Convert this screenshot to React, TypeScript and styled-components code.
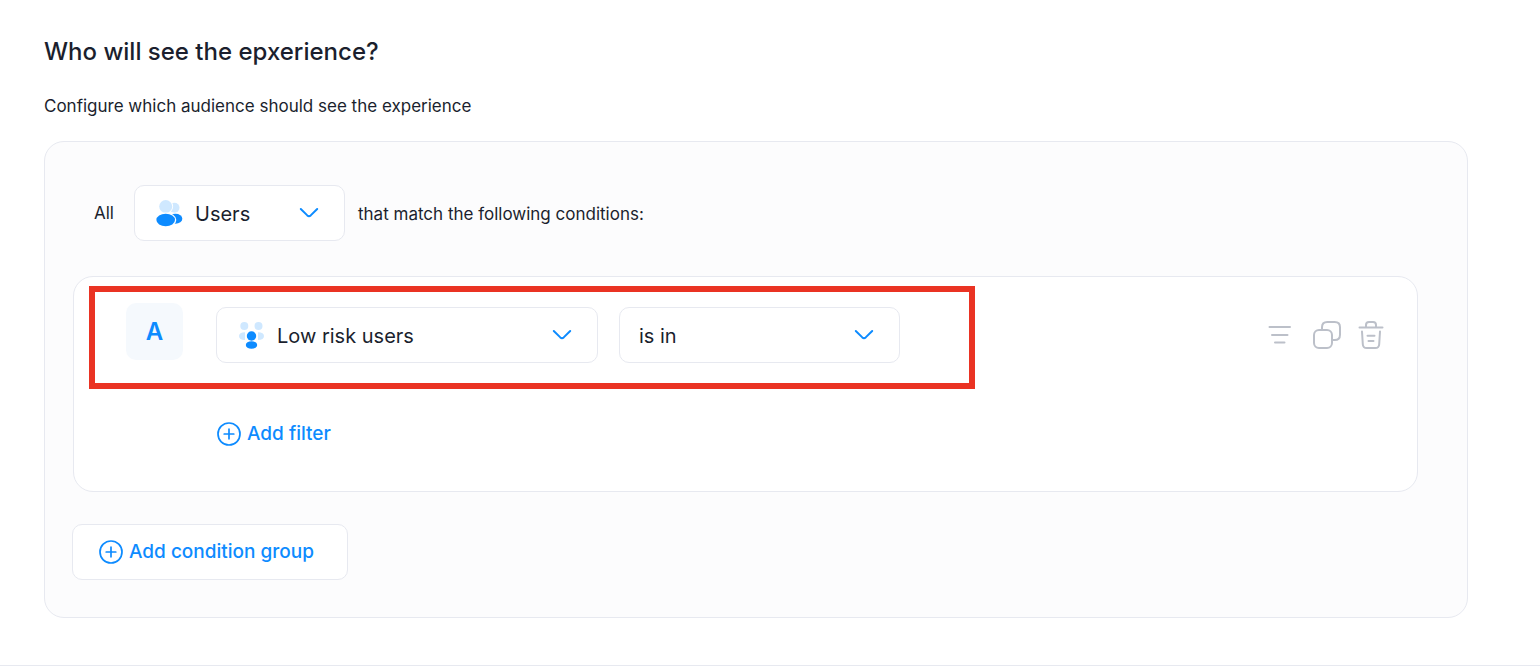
import React from "react";
import styled, { createGlobalStyle } from "styled-components";

const blue = "#0d8bff";
const ink = "#1b1f2e";
const line = "#e7e9f0";

const GlobalStyle = createGlobalStyle`
  * { box-sizing: border-box; }
  body {
    margin: 0;
    background: #fff;
    color: ${ink};
    font-family: Inter, "Liberation Sans", sans-serif;
  }
  button, select { font: inherit; color: inherit; margin: 0; }
`;

const Page = styled.main`
  padding: 36px 72px 47px 44px;
  border-bottom: 1px solid #e7e9f0;
`;

const Title = styled.h1`
  margin: 0;
  font-size: 24px;
  line-height: 32px;
  font-weight: 500;
`;

const Subtitle = styled.p`
  margin: 26px 0 23px;
  font-size: 17px;
  line-height: 24px;
`;

const Panel = styled.section`
  padding: 43px 49px 37px 28px;
  border: 1px solid ${line};
  border-radius: 20px;
  background: #fcfcfd;
`;

const AudienceRow = styled.div`
  display: flex;
  align-items: center;
  padding-left: 21px;
  margin-bottom: 35px;
  font-size: 17px;
  line-height: 24px;
`;

const Lead = styled.label`
  width: 40px;
`;

const Trail = styled.span`
  margin-left: 13px;
  padding-top: 2px;
`;

const SelectBox = styled.div<{ $width: number }>`
  display: grid;
  align-items: center;
  flex: 0 1 ${(p) => p.$width}px;
  height: 56px;
  > * { grid-area: 1 / 1; }
  > svg { pointer-events: none; }
  > svg:last-child { justify-self: end; margin-right: 26px; }
`;

const LeadingIcon = styled.svg`
  margin-left: 22px;
  z-index: 1;
`;

const Select = styled.select<{ $indent: number }>`
  appearance: none;
  width: 100%;
  height: 100%;
  padding: 2px 60px 0 ${(p) => p.$indent}px;
  border: 1px solid ${line};
  border-radius: 10px;
  background: #fff;
  font-size: 20px;
`;

const Group = styled.div`
  position: relative;
  padding: 26px 32px 43px 52px;
  border: 1px solid ${line};
  border-radius: 20px;
  background: #fff;
`;

const Highlight = styled.div`
  position: absolute;
  top: 9px;
  left: 15px;
  width: 886px;
  height: 103px;
  border: 6px solid #ea3323;
  pointer-events: none;
`;

const RuleRow = styled.div`
  display: flex;
  align-items: flex-start;
`;

const Badge = styled.span`
  display: grid;
  place-items: center;
  flex: none;
  width: 57px;
  height: 57px;
  margin-right: 33px;
  border-radius: 10px;
  background: #f5f9fd;
  color: ${blue};
  font-size: 24px;
  font-weight: 600;
`;

const Fields = styled.div`
  display: flex;
  flex: 1;
  gap: 21px;
  padding-top: 4px;
`;

const Tools = styled.div`
  display: flex;
  gap: 16px;
  padding-top: 18px;
`;

const Tool = styled.button`
  display: flex;
  padding: 0;
  border: 0;
  background: none;
`;

const LinkButton = styled.button`
  display: flex;
  align-items: center;
  gap: 6px;
  margin: 57px 0 0 91px;
  padding: 0;
  border: 0;
  background: none;
  color: ${blue};
  font-size: 19px;
  line-height: 28px;
  font-weight: 500;
`;

const OutlineButton = styled(LinkButton)`
  height: 56px;
  margin: 32px 0 0 -1px;
  padding: 0 33px 0 26px;
  border: 1px solid ${line};
  border-radius: 10px;
  background: #fff;
`;

const Chevron = () => (
  <svg width="20" height="12" viewBox="0 0 20 12" fill="none" stroke={blue} strokeWidth="2" strokeLinecap="round" strokeLinejoin="round" aria-hidden="true">
    <path d="M1.8 2 8.3 8.4Q10 10 11.7 8.4L18.2 2" />
  </svg>
);

const PlusCircle = () => (
  <svg width="24" height="24" viewBox="0 0 24 24" fill="none" stroke={blue} strokeWidth="1.7" strokeLinecap="round" aria-hidden="true">
    <circle cx="12" cy="12" r="11" />
    <path d="M12 7.2v9.6M7.2 12h9.6" />
  </svg>
);

const UsersIcon = () => (
  <LeadingIcon width="28" height="28" viewBox="0 0 28 28" aria-hidden="true">
    <circle cx="18.5" cy="8.7" r="5" fill="#cfe8ff" />
    <ellipse cx="19.5" cy="19.8" rx="6.8" ry="5" fill={blue} />
    <circle cx="9.7" cy="7.5" r="7.4" fill="#fff" />
    <circle cx="9.7" cy="7.5" r="6.5" fill="#cfe8ff" />
    <ellipse cx="9.7" cy="21" rx="10.6" ry="7.4" fill="#fff" />
    <ellipse cx="9.7" cy="21" rx="9.3" ry="6.2" fill={blue} />
  </LeadingIcon>
);

const SegmentIcon = () => (
  <LeadingIcon width="28" height="28" viewBox="0 0 28 28" aria-hidden="true">
    <g fill="#cfe8ff">
      <circle cx="6.3" cy="5" r="4" />
      <circle cx="20.5" cy="5" r="4" />
      <path d="M7 11.2v7.8Q1 19 1 15.1T7 11.2ZM20 11.2v7.8Q26 19 26 15.1T20 11.2Z" />
    </g>
    <circle cx="13.5" cy="15" r="5.8" fill="#fff" />
    <circle cx="13.5" cy="15" r="4.7" fill={blue} />
    <ellipse cx="13.5" cy="24" rx="5.7" ry="3.8" fill={blue} />
  </LeadingIcon>
);

const toolStroke = { fill: "none", stroke: "#bcc0c9", strokeWidth: 2, strokeLinecap: "round", strokeLinejoin: "round" } as const;

const FilterIcon = () => (
  <svg width="30" height="28" viewBox="0 0 30 28" {...toolStroke} aria-hidden="true">
    <path d="M2.5 6h20.5M5 14h15.5M8 21.5h9.5" />
  </svg>
);

const CopyIcon = () => (
  <svg width="28" height="28" viewBox="0 0 28 28" {...toolStroke} aria-hidden="true">
    <rect x="1" y="9" width="18" height="18" rx="5" />
    <path d="M9 8.5V6.3Q9 1 14.3 1h7.4Q27 1 27 6.3v7.4Q27 19 21.7 19h-2" />
  </svg>
);

const TrashIcon = () => (
  <svg width="28" height="28" viewBox="0 0 28 28" {...toolStroke} aria-hidden="true">
    <path d="M2.5 6.5h23M9 6V4Q9 1 12 1h4q3 0 3 3v2M5 10.5l.8 12.7Q6 27 9.8 27h8.4q3.8 0 4-3.8L23 10.5M10.5 14.8h7M11.5 20h5" />
  </svg>
);

export default function App() {
  return (
    <>
      <GlobalStyle />
      <Page>
        <Title>Who will see the epxerience?</Title>
        <Subtitle>Configure which audience should see the experience</Subtitle>
        <Panel>
          <AudienceRow>
            <Lead htmlFor="audience">All</Lead>
            <SelectBox $width={211}>
              <Select id="audience" $indent={60}>
                <option>Users</option>
              </Select>
              <UsersIcon />
              <Chevron />
            </SelectBox>
            <Trail>that match the following conditions:</Trail>
          </AudienceRow>
          <Group>
            <RuleRow>
              <Badge>A</Badge>
              <Fields>
                <SelectBox $width={382}>
                  <Select aria-label="Segment" $indent={60}>
                    <option>Low risk users</option>
                  </Select>
                  <SegmentIcon />
                  <Chevron />
                </SelectBox>
                <SelectBox $width={281}>
                  <Select aria-label="Operator" $indent={19}>
                    <option>is in</option>
                  </Select>
                  <Chevron />
                </SelectBox>
              </Fields>
              <Tools>
                <Tool type="button" aria-label="Filter"><FilterIcon /></Tool>
                <Tool type="button" aria-label="Duplicate"><CopyIcon /></Tool>
                <Tool type="button" aria-label="Delete"><TrashIcon /></Tool>
              </Tools>
            </RuleRow>
            <LinkButton type="button"><PlusCircle />Add filter</LinkButton>
            <Highlight />
          </Group>
          <OutlineButton type="button"><PlusCircle />Add condition group</OutlineButton>
        </Panel>
      </Page>
    </>
  );
}
